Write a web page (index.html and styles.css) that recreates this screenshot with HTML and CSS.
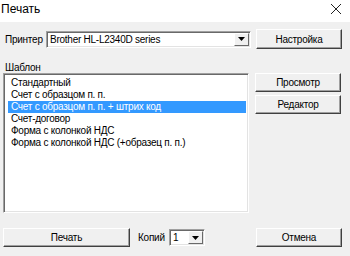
FILE: index.html
```html
<!DOCTYPE html>
<html lang="ru">
<head>
<meta charset="utf-8">
<title>Печать</title>
<link rel="stylesheet" href="styles.css">
</head>
<body>
<div class="window">
  <div class="titlebar">
    <span class="title">Печать</span>
    <svg class="close" width="12" height="12" viewBox="0 0 12 12"><path d="M1 1 L11 11 M11 1 L1 11" stroke="#222" stroke-width="1"/></svg>
  </div>
  <div class="content">
    <div class="row printer-row">
      <span class="label">Принтер</span>
      <div class="combo printer-combo">
        <span class="combo-text">Brother HL-L2340D series</span>
        <span class="drop"><svg width="7" height="4" viewBox="0 0 7 4"><path d="M0 0 H7 L3.5 4 Z" fill="#000"/></svg></span>
      </div>
      <button class="btn side-btn">Настройка</button>
    </div>
    <div class="label template-label">Шаблон</div>
    <div class="row list-row">
      <div class="listbox">
        <div class="item">Стандартный</div>
        <div class="item">Счет с образцом п. п.</div>
        <div class="item selected">Счет с образцом п. п. + штрих код</div>
        <div class="item">Счет-договор</div>
        <div class="item">Форма с колонкой НДС</div>
        <div class="item">Форма с колонкой НДС (+образец п. п.)</div>
      </div>
      <div class="side-col">
        <button class="btn side-btn">Просмотр</button>
        <button class="btn side-btn">Редактор</button>
      </div>
    </div>
    <div class="row bottom-row">
      <button class="btn print-btn">Печать</button>
      <span class="label copies-label">Копий</span>
      <div class="combo copies-combo">
        <span class="combo-text">1</span>
        <span class="drop"><svg width="7" height="4" viewBox="0 0 7 4"><path d="M0 0 H7 L3.5 4 Z" fill="#000"/></svg></span>
      </div>
      <button class="btn side-btn cancel-btn">Отмена</button>
    </div>
  </div>
</div>
</body>
</html>
```
FILE: styles.css
```css
html, body {
  margin: 0;
  padding: 0;
}
body {
  width: 350px;
  height: 256px;
  overflow: hidden;
  background: #f0f0f0;
  font-family: "Liberation Sans", Arial, sans-serif;
  font-size: 10px;
  letter-spacing: -0.25px;
  color: #000;
}
.window {
  width: 350px;
  height: 256px;
  display: flex;
  flex-direction: column;
}
.titlebar {
  height: 22px;
  background: #fff;
  display: flex;
  align-items: center;
  justify-content: space-between;
  padding-right: 8px;
}
.title {
  font-size: 12px;
  letter-spacing: 0;
  margin-left: 1px;
  margin-top: -4px;
}
.close {
  margin-top: -4px;
}
.content {
  padding: 7px 0 0 3px;
  display: flex;
  flex-direction: column;
}
.row {
  display: flex;
  align-items: center;
}
.label {
  white-space: nowrap;
}
.printer-row {
  height: 20px;
}
.printer-row .label {
  margin-left: 2px;
  width: 41px;
}
.combo {
  box-sizing: border-box;
  height: 17px;
  background: #fff;
  border: 1px solid;
  border-color: #a0a0a0 #fff #fff #a0a0a0;
  box-shadow: inset 1px 1px 0 #696969, inset -1px -1px 0 #e3e3e3;
  display: flex;
  align-items: stretch;
  padding: 1px;
}
.combo-text {
  flex: 1;
  padding-left: 2px;
  line-height: 13px;
  white-space: nowrap;
}
.drop {
  width: 15px;
  box-sizing: border-box;
  background: #f0f0f0;
  border: 1px solid;
  border-color: #fff #696969 #696969 #fff;
  display: flex;
  align-items: center;
  justify-content: center;
}
.printer-combo {
  width: 205px;
}
.btn {
  box-sizing: border-box;
  font-family: "Liberation Sans", Arial, sans-serif;
  font-size: 10px;
  letter-spacing: -0.25px;
  background: #f0f0f0;
  color: #000;
  border: 1px solid;
  border-color: #fff #404040 #404040 #fff;
  box-shadow: inset -1px -1px 0 #a0a0a0;
  padding: 0;
  margin: 0;
  height: 20px;
}
.side-btn {
  width: 86px;
}
.printer-row .side-btn {
  margin-left: 5px;
}
.template-label {
  margin: 13px 0 0 2px;
  height: 11px;
  line-height: 11px;
}
.list-row {
  align-items: flex-start;
}
.listbox {
  box-sizing: border-box;
  width: 246px;
  height: 140px;
  background: #fff;
  border: 1px solid;
  border-color: #a0a0a0 #fff #fff #a0a0a0;
  box-shadow: inset 1px 1px 0 #696969, inset -1px -1px 0 #e3e3e3;
  padding: 3px 2px 0 4px;
}
.item {
  height: 12px;
  line-height: 12px;
  padding-left: 3px;
  white-space: nowrap;
}
.item.selected {
  background: #3399ff;
  color: #fff;
}
.side-col {
  display: flex;
  flex-direction: column;
  gap: 3px;
  margin-left: 6px;
}
.side-col .side-btn {
  height: 19px;
}
.bottom-row {
  margin-top: 15px;
}
.print-btn {
  width: 127px;
  height: 19px;
}
.copies-label {
  margin-left: 8px;
  width: 31px;
}
.copies-combo {
  width: 36px;
}
.cancel-btn {
  margin-left: 51px;
  height: 19px;
}
```
